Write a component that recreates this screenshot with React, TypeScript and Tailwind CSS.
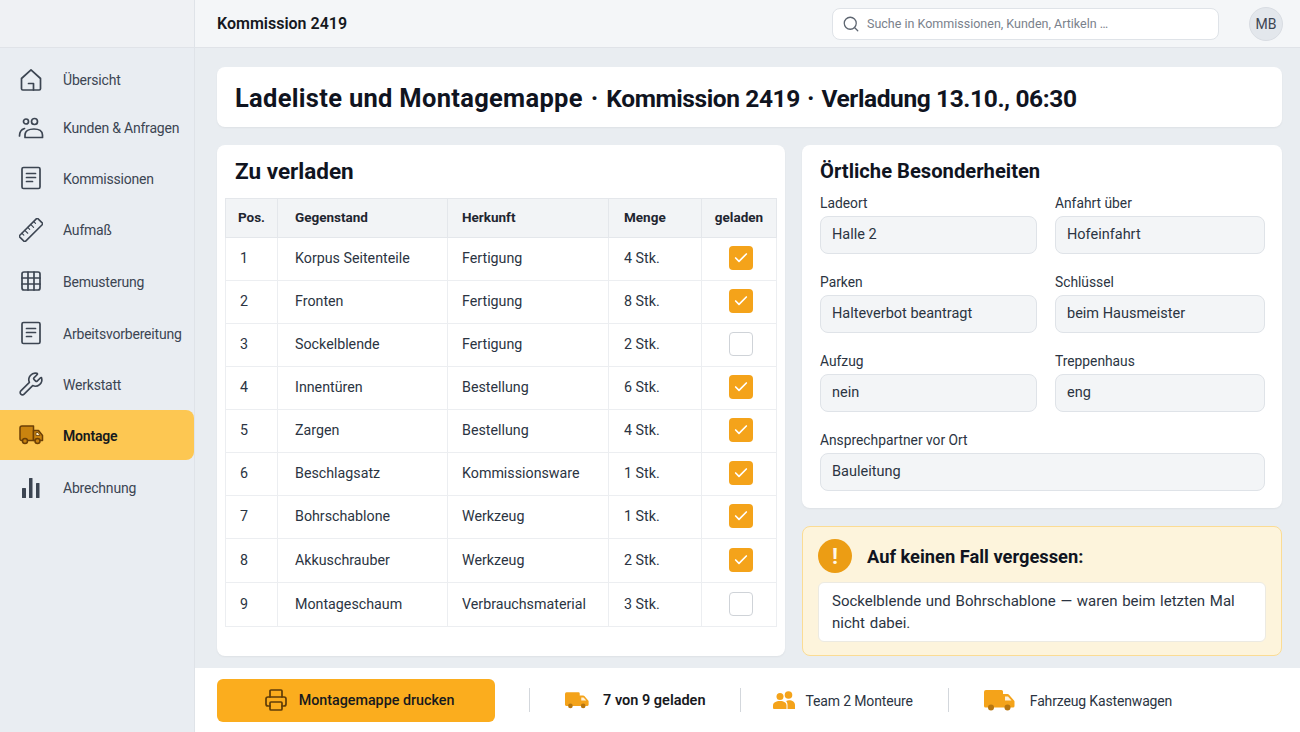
import { Check, Grid3x3, Printer, Search, Wrench } from "lucide-react";
import type { ReactNode } from "react";

const HomeIcon = () => (
  <svg width="24" height="24" viewBox="0 0 24 24" fill="none" stroke="currentColor" strokeWidth="1.7" strokeLinejoin="round" strokeLinecap="round">
    <path d="M2.500 10.500 12 1.800l9.500 8.700v10.200a1.300 1.300 0 0 1-1.300 1.300H3.800a1.300 1.300 0 0 1-1.300-1.300z" />
    <path d="M9.500 15.500h5v6.500" />
  </svg>
);

const UsersIcon = () => (
  <svg width="26" height="24" viewBox="0 0 26 24" fill="none" stroke="currentColor" strokeWidth="1.7" strokeLinecap="round" strokeLinejoin="round">
    <circle cx="8" cy="5.500" r="2.500" />
    <circle cx="16.500" cy="5.500" r="3" />
    <path d="M1.500 20c0-4 1.500-6.500 5-7.500" />
    <path d="M7 21.500v-2.500c0-4 4-6 9-6s8.500 2 8.500 6v2.500z" />
  </svg>
);

const RulerIcon = () => (
  <svg width="24" height="24" viewBox="0 0 26 26" fill="none" stroke="currentColor" strokeWidth="1.7" strokeLinecap="round" strokeLinejoin="round">
    <g transform="rotate(-45 13 13)">
      <rect x="-1" y="8.500" width="28" height="9" rx="1" />
      <path d="M3.500 8.500v3M8 8.500v4.500M12.500 8.500v3M17 8.500v4.500M21.500 8.500v3" strokeWidth="1.200" />
    </g>
  </svg>
);

const DocIcon = ({ lines }: { lines: number }) => (
  <svg width="20" height="24" viewBox="0 0 20 24" fill="none" stroke="currentColor" strokeWidth="1.700" strokeLinecap="round">
    <rect x="1" y="1.500" width="18" height="21" rx="1.500" />
    <path d="M5.500 7.500h9M5.500 11.500h9" />
    {lines === 3 ? <path d="M5.500 15.500h6" /> : <path d="M5.500 15.500h5" />}
  </svg>
);

const ChartIcon = () => (
  <svg width="20" height="22" viewBox="0 0 20 22" fill="currentColor">
    <rect x="1" y="11" width="4" height="10" rx="0.500" />
    <rect x="8" y="1" width="3.500" height="20" rx="0.500" />
    <rect x="15" y="6" width="3.500" height="15" rx="0.500" />
  </svg>
);

const NavTruck = () => (
  <svg width="25" height="20" viewBox="0 0 25 20" stroke="#6b3f06" strokeWidth="1.500" strokeLinejoin="round">
    <path d="M1 3a2 2 0 0 1 2-2h11.500v14.500H2.500A1.500 1.500 0 0 1 1 14z" fill="#c9830f" />
    <path d="M14.500 5.500h5l4 5v5h-9z" fill="#c9830f" />
    <path d="M17 7.500h2l2 3h-4z" fill="#fff3d0" strokeWidth="0.800" />
    <circle cx="6" cy="16" r="2.500" fill="#c9830f" />
    <circle cx="18.500" cy="16" r="2.500" fill="#c9830f" />
  </svg>
);

const FilledTruck = ({ w, h }: { w: number; h: number }) => (
  <svg width={w} height={h} viewBox="0 0 31 21" fill="#f4a31a">
    <path d="M0 2a2 2 0 0 1 2-2h15.500a1.500 1.500 0 0 1 1.500 1.500V4h4.500a2 2 0 0 1 1.500.7l5 5.800a1.500 1.500 0 0 1 .5 1V16a1.500 1.500 0 0 1-1.500 1.500H1.500A1.500 1.500 0 0 1 0 16z" />
    <path d="M21 6.500h3l3.500 4H21z" fill="#fff" opacity="0.850" />
    <circle cx="7" cy="17.500" r="3" fill="#b8760f" />
    <circle cx="23.500" cy="17.500" r="3" fill="#b8760f" />
  </svg>
);

const TeamIcon = () => (
  <svg width="22" height="19" viewBox="0 0 22 19" fill="#f4a31a">
    <circle cx="7" cy="5.500" r="3.500" />
    <circle cx="15.500" cy="4" r="3.800" />
    <path d="M0 17v-2.500C0 11.500 3 10 7 10s6.500 1.500 6.500 4.500V18H1a1 1 0 0 1-1-1z" />
    <path d="M14.500 18v-4c0-1.500-.5-3-1.500-4 1-.5 2-.7 3-.7 3.500 0 6 1.700 6 4.700v4z" />
  </svg>
);

type NavItem = { label: string; icon: ReactNode; height: string; active?: boolean };

const navItems: NavItem[] = [
  { label: "Übersicht", icon: <HomeIcon />, height: "h-[49px]" },
  { label: "Kunden & Anfragen", icon: <UsersIcon />, height: "h-[47px]" },
  { label: "Kommissionen", icon: <DocIcon lines={3} />, height: "h-[54px]" },
  { label: "Aufmaß", icon: <RulerIcon />, height: "h-[49px]" },
  { label: "Bemusterung", icon: <Grid3x3 size={24} strokeWidth={1.7} />, height: "h-[54px]" },
  { label: "Arbeitsvorbereitung", icon: <DocIcon lines={2} />, height: "h-[50px]" },
  { label: "Werkstatt", icon: <Wrench size={26} strokeWidth={1.5} />, height: "h-[52px]" },
  { label: "Montage", icon: <NavTruck />, height: "h-[50px]", active: true },
  { label: "Abrechnung", icon: <ChartIcon />, height: "h-[55px]" },
];

const rows = [
  { pos: 1, name: "Korpus Seitenteile", origin: "Fertigung", qty: "4 Stk.", loaded: true },
  { pos: 2, name: "Fronten", origin: "Fertigung", qty: "8 Stk.", loaded: true },
  { pos: 3, name: "Sockelblende", origin: "Fertigung", qty: "2 Stk.", loaded: false },
  { pos: 4, name: "Innentüren", origin: "Bestellung", qty: "6 Stk.", loaded: true },
  { pos: 5, name: "Zargen", origin: "Bestellung", qty: "4 Stk.", loaded: true },
  { pos: 6, name: "Beschlagsatz", origin: "Kommissionsware", qty: "1 Stk.", loaded: true },
  { pos: 7, name: "Bohrschablone", origin: "Werkzeug", qty: "1 Stk.", loaded: true },
  { pos: 8, name: "Akkuschrauber", origin: "Werkzeug", qty: "2 Stk.", loaded: true },
  { pos: 9, name: "Montageschaum", origin: "Verbrauchsmaterial", qty: "3 Stk.", loaded: false },
];

const Field = ({ label, value, wide }: { label: string; value: string; wide?: boolean }) => (
  <div className={wide ? "col-span-2" : ""}>
    <div className="h-[20px] text-[13.800px] leading-[20px] text-[#2b3442]">{label}</div>
    <div className="mt-[3px] flex h-[38px] items-center rounded-lg border border-[#dfe3e8] bg-[#f3f5f7] px-[11px] text-[14.500px] text-[#2b3442]">
      {value}
    </div>
  </div>
);

const Divider = () => <div className="h-[24px] w-px bg-[#d3d7dc]" />;

export default function App() {
  return (
    <div className="flex h-[732px] w-[1300px] overflow-hidden bg-[#e9edf1] font-['Roboto',sans-serif] text-[#1f2937]">
      <aside className="flex w-[195px] shrink-0 flex-col border-r border-[#dfe3e8] bg-[#e9edf2]">
        <div className="h-[48px] shrink-0 border-b border-[#e0e3e8] bg-[#eff1f4]" />
        <nav className="pt-[7px]">
          {navItems.map((item) => (
            <div
              key={item.label}
              className={`flex items-center ${item.height} ${
                item.active ? "rounded-r-lg bg-[#fdc752] font-semibold text-[#17191d]" : "text-[#3c4552]"
              }`}
            >
              <div className="flex w-[63px] shrink-0 items-center justify-center pr-[1px]">{item.icon}</div>
              <span className="mt-[2px] text-[14px] tracking-[-0.2px]">{item.label}</span>
            </div>
          ))}
        </nav>
      </aside>

      <div className="flex min-w-0 flex-1 flex-col">
        <header className="flex h-[48px] shrink-0 items-center border-b border-[#e0e3e8] bg-[#f4f6f8] pl-[22px] pr-[17px]">
          <div className="text-[16px] font-semibold text-[#15181e]">Kommission 2419</div>
          <div className="ml-auto flex h-[32px] w-[387px] items-center rounded-lg border border-[#dfe3e8] bg-white pl-[9px] text-[12.500px] text-[#7a818b]">
            <Search size={18} strokeWidth={1.7} className="text-[#5d6570]" />
            <span className="ml-[7px] mt-[2px]">Suche in Kommissionen, Kunden, Artikeln …</span>
          </div>
          <div className="ml-[30px] flex h-[34px] w-[34px] items-center justify-center rounded-full border border-[#d9dde3] bg-[#e3e7ec] pt-[1px] text-[14px] text-[#3c4552]">
            MB
          </div>
        </header>

        <main className="flex min-h-0 flex-1 flex-col gap-[18px] pl-[22px] pr-[18px] pt-[19px]">
          <div className="flex h-[60px] shrink-0 items-center rounded-lg bg-white pl-[18px] shadow-[0_1px_2px_rgba(0,0,0,0.05)]">
            <h1 className="pt-[2px] font-bold text-[#10141f]">
              <span className="text-[25.500px] tracking-[0.3px]">Ladeliste und Montagemappe</span>
              <span className="mx-[8px] text-[25px]">·</span>
              <span className="text-[24.500px] tracking-[-0.4px]">Kommission 2419</span>
              <span className="mx-[7px] text-[25px]">·</span>
              <span className="text-[24.500px] tracking-[-0.4px]">Verladung 13.10., 06:30</span>
            </h1>
          </div>

          <div className="flex gap-[17px]">
            <section className="h-[511px] w-[568px] shrink-0 rounded-lg bg-white px-[8px] shadow-[0_1px_2px_rgba(0,0,0,0.05)]">
              <h2 className="flex h-[53px] items-center pl-[10px] text-[22.500px] font-bold text-[#10141f]">
                Zu verladen
              </h2>
              <table className="w-[551px] table-fixed border-collapse text-[14.250px] text-[#2b3442]">
                <colgroup>
                  <col className="w-[52px]" />
                  <col className="w-[170px]" />
                  <col className="w-[161px]" />
                  <col className="w-[93px]" />
                  <col className="w-[75px]" />
                </colgroup>
                <thead>
                  <tr className="h-[39px] bg-[#f2f4f6] text-[13.500px] font-semibold text-[#1f2630]">
                    <th className="border border-[#e4e7eb] pb-[2px] text-center">Pos.</th>
                    <th className="border border-[#e4e7eb] pb-[2px] pl-[17px] text-left">Gegenstand</th>
                    <th className="border border-[#e4e7eb] pb-[2px] pl-[14px] text-left">Herkunft</th>
                    <th className="border border-[#e4e7eb] pb-[2px] pl-[15px] text-left">Menge</th>
                    <th className="border border-[#e4e7eb] pb-[2px] text-center">geladen</th>
                  </tr>
                </thead>
                <tbody>
                  {rows.map((row) => (
                    <tr key={row.pos} className={row.pos >= 8 ? "h-[44px]" : "h-[43px]"}>
                      <td className="border border-[#eceef1] pl-[14px]">{row.pos}</td>
                      <td className="border border-[#eceef1] pl-[17px]">{row.name}</td>
                      <td className="border border-[#eceef1] pl-[14px]">{row.origin}</td>
                      <td className="border border-[#eceef1] pl-[15px]">{row.qty}</td>
                      <td className="border border-[#eceef1] pl-[3px]">
                        <div
                          className={`mx-auto mb-[2px] flex h-[24px] w-[24px] items-center justify-center rounded ${
                            row.loaded ? "bg-[#f4a31a]" : "border border-[#cfd3d8] bg-white"
                          }`}
                        >
                          {row.loaded && <Check size={16} strokeWidth={2.500} className="text-white" />}
                        </div>
                      </td>
                    </tr>
                  ))}
                </tbody>
              </table>
            </section>

            <div className="flex min-w-0 flex-1 flex-col gap-[18px]">
              <section className="h-[363px] rounded-lg bg-white px-[18px] shadow-[0_1px_2px_rgba(0,0,0,0.05)]">
                <h2 className="flex h-[48px] items-center pt-[4px] text-[20.200px] font-bold text-[#10141f]">
                  Örtliche Besonderheiten
                </h2>
                <div className="grid grid-cols-[217px_210px] gap-x-[18px] gap-y-[18px]">
                  <Field label="Ladeort" value="Halle 2" />
                  <Field label="Anfahrt über" value="Hofeinfahrt" />
                  <Field label="Parken" value="Halteverbot beantragt" />
                  <Field label="Schlüssel" value="beim Hausmeister" />
                  <Field label="Aufzug" value="nein" />
                  <Field label="Treppenhaus" value="eng" />
                  <Field label="Ansprechpartner vor Ort" value="Bauleitung" wide />
                </div>
              </section>

              <section className="h-[130px] rounded-lg border border-[#fbdc94] bg-[#fdf4dc] px-[15px] pt-[12px]">
                <div className="flex items-center gap-[15px]">
                  <div className="flex h-[34px] w-[34px] items-center justify-center rounded-full bg-[#ec9d14] text-[22px] font-bold text-[#fff8e8]">
                    !
                  </div>
                  <div className="mt-[2px] text-[18.300px] font-bold text-[#10141f]">Auf keinen Fall vergessen:</div>
                </div>
                <div className="mt-[9px] h-[60px] rounded-md border border-[#eceae2] bg-white px-[13px] py-[7px] text-[15px] leading-[22px] text-[#2b3442] [word-spacing:1px]">
                  Sockelblende und Bohrschablone — waren beim letzten Mal nicht dabei.
                </div>
              </section>
            </div>
          </div>
        </main>

        <footer className="flex h-[64px] shrink-0 items-center bg-white pl-[22px] text-[14px] tracking-[-0.15px] text-[#2b3442]">
          <button className="flex h-[43px] w-[278px] items-center justify-center gap-[11px] rounded-md bg-[#fbad1e] pl-[6px] text-[14.300px] font-medium tracking-normal text-[#17191d]">
            <Printer size={24} strokeWidth={1.7} className="text-[#5f3c08]" />
            <span className="mt-[2px]">Montagemappe drucken</span>
          </button>
          <div className="ml-[34px]">
            <Divider />
          </div>
          <div className="ml-[35px] flex items-center gap-[14px] text-[14.500px] font-semibold tracking-normal text-[#17191d]">
            <FilledTruck w={24} h={17} />
            <span className="mt-[2px]">7 von 9 geladen</span>
          </div>
          <div className="ml-[34px]">
            <Divider />
          </div>
          <div className="ml-[32px] flex items-center gap-[11px]">
            <TeamIcon />
            <span className="mt-[2px]">Team 2 Monteure</span>
          </div>
          <div className="ml-[35px]">
            <Divider />
          </div>
          <div className="ml-[35px] flex items-center gap-[15px]">
            <FilledTruck w={31} h={21} />
            <span className="mt-[2px]">Fahrzeug Kastenwagen</span>
          </div>
        </footer>
      </div>
    </div>
  );
}
